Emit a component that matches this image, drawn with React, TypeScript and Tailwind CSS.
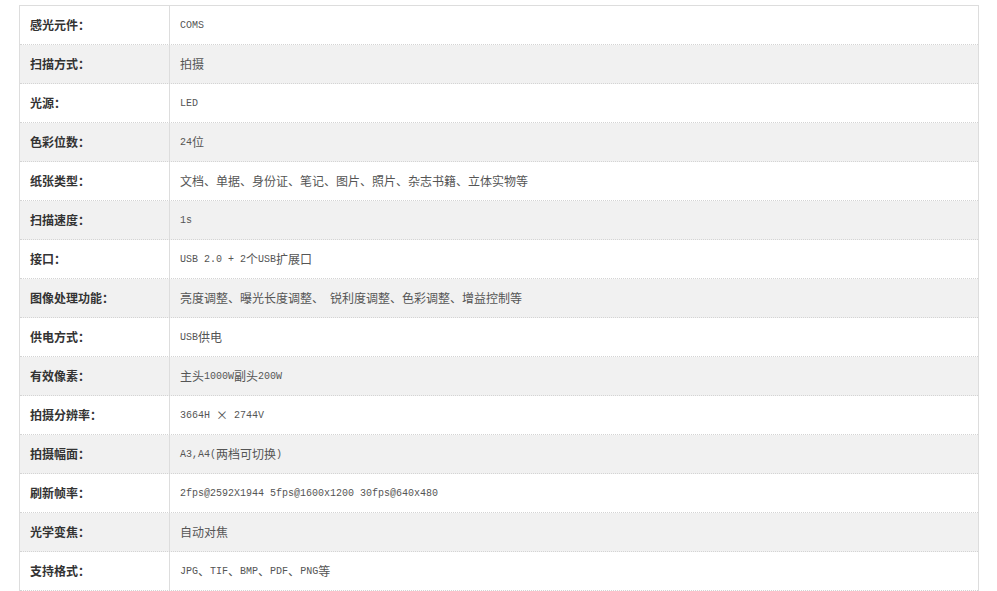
const rows: [string, string][] = [
  ['感光元件：', 'COMS'],
  ['扫描方式：', '拍摄'],
  ['光源：', 'LED'],
  ['色彩位数：', '24位'],
  ['纸张类型：', '文档、单据、身份证、笔记、图片、照片、杂志书籍、立体实物等'],
  ['扫描速度：', '1s'],
  ['接口：', 'USB 2.0 + 2个USB扩展口'],
  ['图像处理功能：', '亮度调整、曝光长度调整、 锐利度调整、色彩调整、增益控制等'],
  ['供电方式：', 'USB供电'],
  ['有效像素：', '主头1000W副头200W'],
  ['拍摄分辨率：', '3664H × 2744V'],
  ['拍摄幅面：', 'A3,A4(两档可切换)'],
  ['刷新帧率：', '2fps@2592X1944 5fps@1600x1200 30fps@640x480'],
  ['光学变焦：', '自动对焦'],
  ['支持格式：', 'JPG、TIF、BMP、PDF、PNG等'],
]

// latin runs look like a narrow bitmap font in the original, so use mono at 10px
function Value({ text }: { text: string }) {
  const parts = text.split(/([\x20-\x7e]+)/).filter((p) => p !== '')
  return (
    <>
      {parts.map((p, i) =>
        /^[\x20-\x7e]+$/.test(p) ? (
          <span
            key={i}
            className="text-[10px] whitespace-pre"
            style={{ fontFamily: '"Liberation Mono", monospace' }}
          >
            {p}
          </span>
        ) : (
          <span key={i}>{p}</span>
        )
      )}
    </>
  )
}

export default function App() {
  return (
    <div
      className="bg-white w-[997px] h-[591px] overflow-hidden pt-[5px] pl-[19px]"
      style={{ fontFamily: '"Noto Sans CJK SC", "Liberation Sans", sans-serif' }}
    >
      <div className="w-[960px] border border-[#dddddd] border-b-0">
        {rows.map(([label, value], i) => (
          <div
            key={label}
            className={`flex h-[39px] border-b border-dotted border-[#d4d4d4] ${
              i % 2 === 1 ? 'bg-[#f1f1f1]' : 'bg-white'
            }`}
          >
            <div className="w-[150px] shrink-0 border-r border-[#dddddd] pl-[10px] flex items-center text-[12px] font-bold text-[#333333]">
              {label}
            </div>
            <div className="flex-1 pl-[10px] flex items-center text-[12px] text-[#555555]">
              <Value text={value} />
            </div>
          </div>
        ))}
      </div>
    </div>
  )
}
